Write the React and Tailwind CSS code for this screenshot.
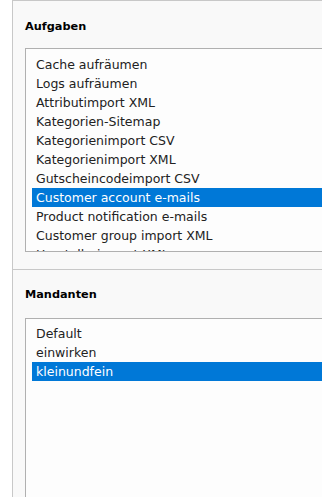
import React from "react";

const tasks = [
  "Cache aufräumen",
  "Logs aufräumen",
  "Attributimport XML",
  "Kategorien-Sitemap",
  "Kategorienimport CSV",
  "Kategorienimport XML",
  "Gutscheincodeimport CSV",
  "Customer account e-mails",
  "Product notification e-mails",
  "Customer group import XML",
  "Herstellerimport XML",
];

const clients = ["Default", "einwirken", "kleinundfein"];

function ListBox({ items, selected, className }) {
  return (
    <div
      className={
        "w-[330px] border border-r-0 border-[#b0b0b0] bg-[#fdfdfd] pl-[6px] overflow-hidden " +
        className
      }
    >
      {items.map((it) => (
        <div
          key={it}
          className={
            "h-[19px] leading-[19px] pl-[4px] whitespace-nowrap text-[12.5px] " +
            (it === selected ? "bg-[#0078d7] text-white" : "text-[#222]")
          }
        >
          {it}
        </div>
      ))}
    </div>
  );
}

export default function App() {
  return (
    <div
      className="w-[322px] h-[497px] overflow-hidden bg-white pl-[12px]"
      style={{ fontFamily: '"DejaVu Sans", Verdana, sans-serif' }}
    >
      <div className="w-[340px] h-[520px] border-l border-t border-[#c8c8c8] bg-[#f9f9f9]">
        <div className="pl-[12px] pt-[18px] h-[269px] border-b border-[#c8c8c8]">
          <div className="text-[11.3px] font-bold leading-[16px] text-black mb-[13px]">
            Aufgaben
          </div>
          <ListBox
            items={tasks}
            selected="Customer account e-mails"
            className="h-[204px] pt-[6px]"
          />
        </div>
        <div className="pl-[12px] pt-[17px]">
          <div className="text-[11.3px] font-bold leading-[16px] text-black mb-[15px]">
            Mandanten
          </div>
          <ListBox
            items={clients}
            selected="kleinundfein"
            className="h-[220px] pt-[5px]"
          />
        </div>
      </div>
    </div>
  );
}
